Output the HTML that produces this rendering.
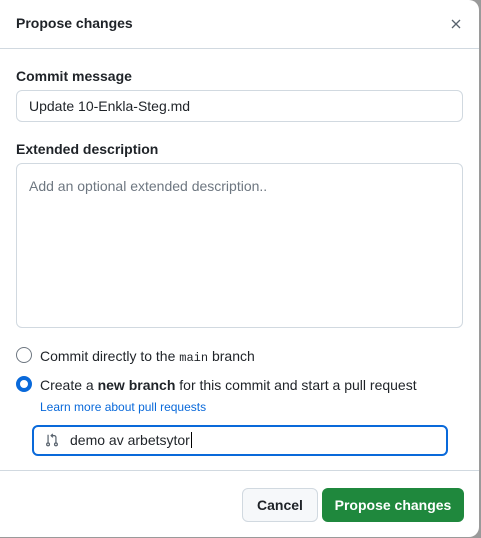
<!DOCTYPE html>
<html><head><style>
html,body{margin:0;width:481px;height:538px;overflow:hidden;background:#9a9a9a;font-family:"Liberation Sans",sans-serif;color:#1f2328}
.d{position:absolute;left:0;top:0;width:479px;height:537px;background:#fff;border-radius:0 10px 10px 0;}
.hd{position:absolute;left:16px;top:15px;font-size:14px;font-weight:bold;}
.hr{position:absolute;left:0;width:479px;height:1px;background:#d1d9e0}
.lb{position:absolute;left:16px;font-size:14px;font-weight:bold}
.in{position:absolute;left:16px;width:447px;border:1px solid #d1d9e0;border-radius:6px;box-sizing:border-box;font-size:14px;padding-left:12px;background:#fff}
.r{position:absolute;left:16px;width:16px;height:16px;border-radius:50%;box-sizing:border-box}
.t{position:absolute;left:40px;font-size:14px}
.btn{position:absolute;top:488px;height:34px;border-radius:6px;box-sizing:border-box;font-size:14px;font-weight:bold;text-align:center;line-height:32px}
</style></head><body>
<div class="d">
<div class="hd">Propose changes</div>
<svg style="position:absolute;left:451px;top:19px" width="10" height="10" viewBox="0 0 10 10" stroke="#59636e" stroke-width="1.3"><path d="M1 1l8 8M9 1l-8 8"/></svg>
<div class="hr" style="top:48px"></div>
<div class="lb" style="top:68px">Commit message</div>
<div class="in" style="top:90px;height:32px;line-height:30px">Update 10-Enkla-Steg.md</div>
<div class="lb" style="top:141px">Extended description</div>
<div class="in" style="top:163px;height:165px;padding-top:14px;color:#6e7781">Add an optional extended description..</div>
<div class="r" style="top:347px;border:1px solid #6e7781"></div>
<div class="t" style="top:348px">Commit directly to the <span style="font-family:'Liberation Mono',monospace;font-size:12px">main</span> branch</div>
<div class="r" style="top:376px;border:4px solid #0969da"></div>
<div class="t" style="top:377px">Create a <b>new branch</b> for this commit and start a pull request</div>
<div style="position:absolute;left:40px;top:400px;font-size:12px;color:#0969da">Learn more about pull requests</div>
<div class="in" style="left:32px;width:416px;top:425px;height:31px;border:2px solid #0969da;padding-left:36px;line-height:27px">demo av arbetsytor<span style="border-left:1px solid #000;margin-left:1px"></span></div>
<svg style="position:absolute;left:45px;top:433px" width="14" height="14" viewBox="0 0 16 16" fill="none" stroke="#59636e" stroke-width="1.4"><circle cx="3.5" cy="13" r="1.6"/><circle cx="12.5" cy="13" r="1.6"/><path d="M3.5 2v9.4M12.5 11.4V5a2 2 0 0 0-2-2H7M9 1L7 3l2 2"/></svg>
<div class="hr" style="top:470px"></div>
<div class="btn" style="left:242px;width:76px;background:#f6f8fa;border:1px solid #d1d9e0">Cancel</div>
<div class="btn" style="left:322px;width:142px;background:#1f883d;color:#fff;line-height:34px">Propose changes</div>
</div>
</body></html>
